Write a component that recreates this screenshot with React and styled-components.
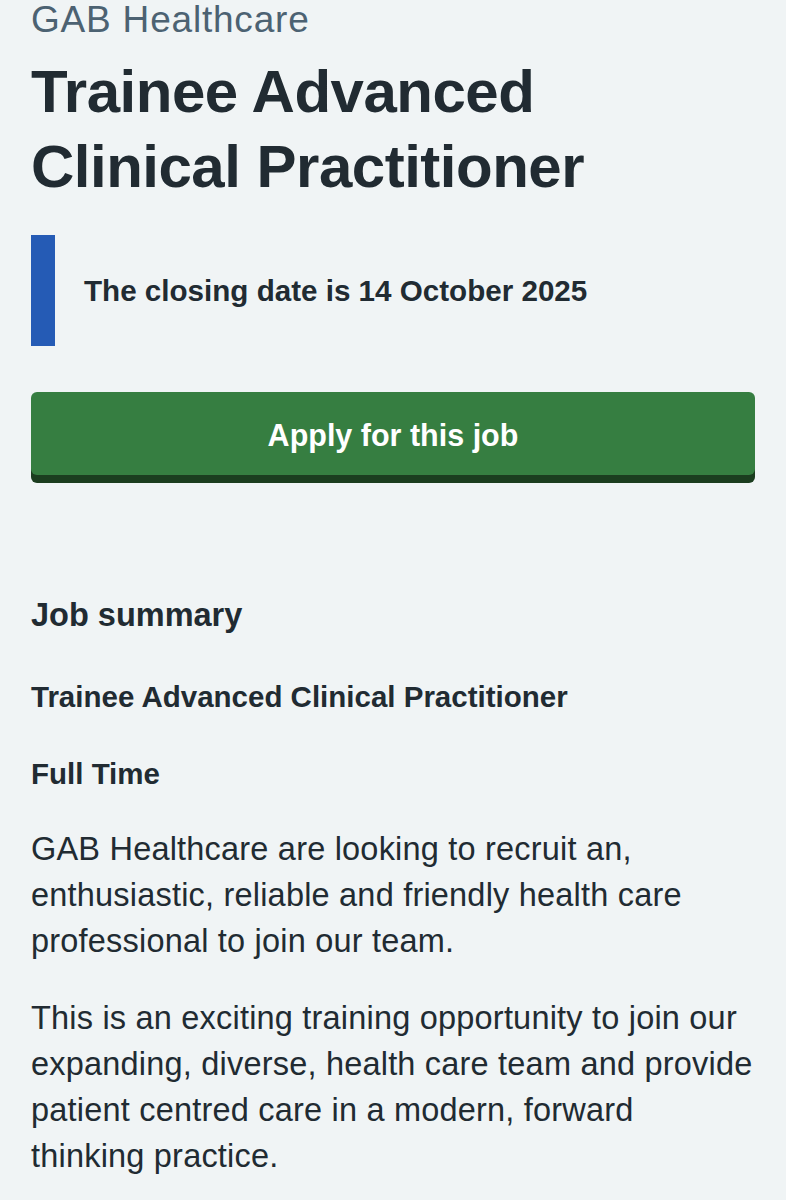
import React from 'react';
import styled, { createGlobalStyle } from 'styled-components';

const GlobalStyle = createGlobalStyle`
  html, body {
    margin: 0;
    padding: 0;
    background: #f0f4f5;
  }
  body {
    font-family: 'Liberation Sans', Arial, sans-serif;
    color: #212b32;
  }
`;

const Page = styled.main`
  padding: 0 31px;
  overflow: hidden;
  height: 1200px;
  box-sizing: border-box;
`;

const Caption = styled.span`
  display: block;
  font-size: 37px;
  line-height: 40px;
  letter-spacing: 0.8px;
  color: #4c6272;
`;

const Title = styled.h1`
  font-size: 60px;
  line-height: 75px;
  font-weight: 700;
  margin: 14px 0 0;
  letter-spacing: -0.5px;
`;

const Inset = styled.div`
  margin-top: 31px;
  border-left: 24px solid #255bb5;
  padding-left: 29px;
  height: 111px;
  display: flex;
  align-items: center;
  box-sizing: border-box;
`;

const InsetText = styled.p`
  margin: 0;
  font-size: 29.6px;
  font-weight: 700;
  line-height: 40px;
`;

const ApplyButton = styled.a`
  display: flex;
  align-items: center;
  justify-content: center;
  margin-top: 46px;
  height: 83px;
  padding-top: 4px;
  box-sizing: border-box;
  background: #367e41;
  border-radius: 6px;
  box-shadow: 0 8px 0 #1b3d1f;
  color: #ffffff;
  font-size: 30.5px;
  font-weight: 700;
  text-decoration: none;
`;

const SectionTitle = styled.h2`
  font-size: 32.5px;
  line-height: 40px;
  font-weight: 700;
  margin: 120px 0 0;
`;

const SubTitle = styled.h3`
  font-size: 29.5px;
  line-height: 40px;
  font-weight: 700;
  margin: ${p => p.$gap}px 0 0;
`;

const Paragraph = styled.p`
  font-size: 32.5px;
  line-height: 46px;
  letter-spacing: 0.2px;
  margin: ${p => p.$gap}px 0 0;
`;

export default function App() {
  return (
    <>
      <GlobalStyle />
      <Page>
        <Caption>GAB Healthcare</Caption>
        <Title>Trainee Advanced Clinical Practitioner</Title>
        <Inset>
          <InsetText>The closing date is 14 October 2025</InsetText>
        </Inset>
        <ApplyButton href="#apply">Apply for this job</ApplyButton>
        <SectionTitle>Job summary</SectionTitle>
        <SubTitle $gap={42}>Trainee Advanced Clinical Practitioner</SubTitle>
        <SubTitle $gap={37}>Full Time</SubTitle>
        <Paragraph $gap={32}>
          GAB Healthcare are looking to recruit an, enthusiastic, reliable and friendly health care professional to join our team.
        </Paragraph>
        <Paragraph $gap={31}>
          This is an exciting training opportunity to join our expanding, diverse, health care team and provide patient centred care in a modern, forward thinking practice.
        </Paragraph>
      </Page>
    </>
  );
}
